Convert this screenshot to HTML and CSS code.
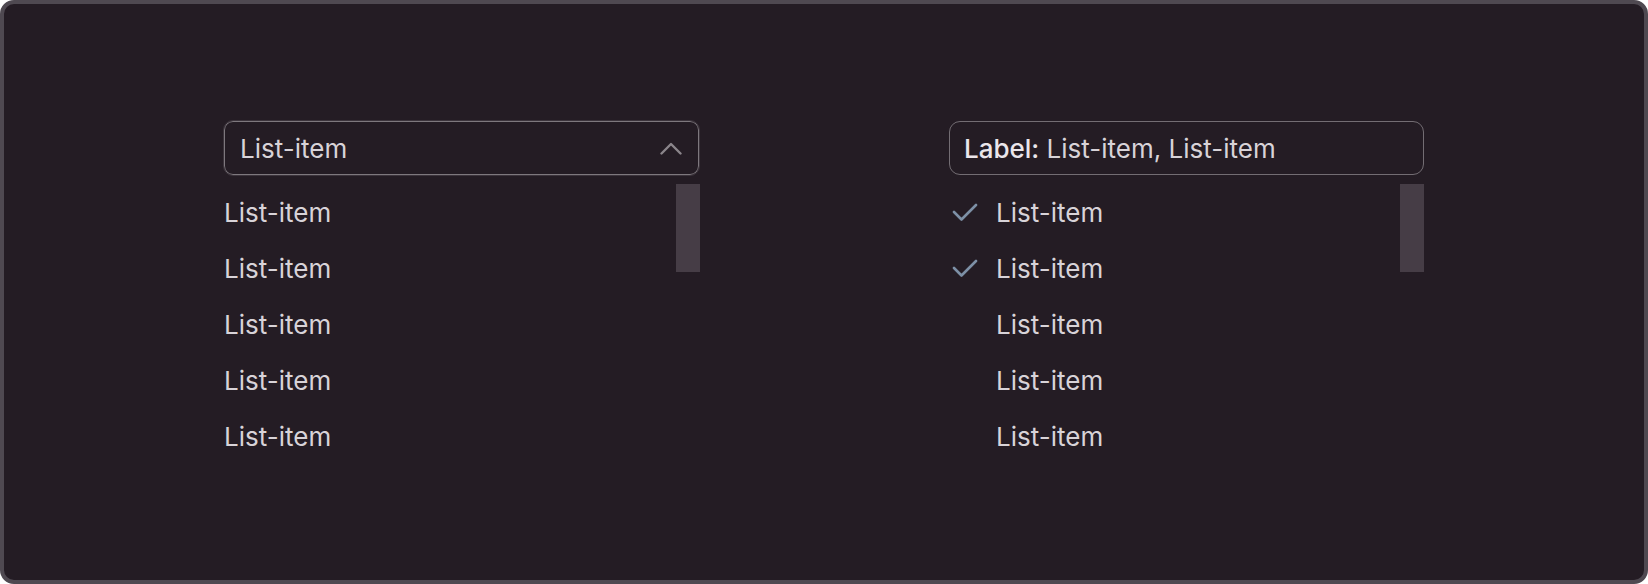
FILE: index.html
```html
<!DOCTYPE html>
<html>
<head>
<meta charset="utf-8">
<link rel="stylesheet" href="styles.css">
</head>
<body>
<div class="panel">
  <div class="columns">
    <div class="dropdown">
      <div class="select single">
        <span class="value">List-item</span>
        <svg class="chevron" width="22" height="13" viewBox="0 0 22 13"><path d="M1.5 11.5 L11 2 L20.5 11.5" fill="none" stroke="#8b858b" stroke-width="2.4" stroke-linecap="round" stroke-linejoin="round"/></svg>
      </div>
      <ul class="list">
        <li class="item">List-item</li>
        <li class="item">List-item</li>
        <li class="item">List-item</li>
        <li class="item">List-item</li>
        <li class="item">List-item</li>
        <span class="scrollbar"></span>
      </ul>
    </div>
    <div class="dropdown">
      <div class="select multi">
        <span class="value"><b class="label">Label:</b> List-item, List-item</span>
      </div>
      <ul class="list">
        <li class="item checkable"><svg class="check" width="26" height="18" viewBox="0 0 26 18"><path d="M2 9 L9.5 16.5 L24 2" fill="none" stroke="#7d90a6" stroke-width="2.6" stroke-linecap="round" stroke-linejoin="round"/></svg><span>List-item</span></li>
        <li class="item checkable"><svg class="check" width="26" height="18" viewBox="0 0 26 18"><path d="M2 9 L9.5 16.5 L24 2" fill="none" stroke="#7d90a6" stroke-width="2.6" stroke-linecap="round" stroke-linejoin="round"/></svg><span>List-item</span></li>
        <li class="item checkable"><span class="check-space"></span><span>List-item</span></li>
        <li class="item checkable"><span class="check-space"></span><span>List-item</span></li>
        <li class="item checkable"><span class="check-space"></span><span>List-item</span></li>
        <span class="scrollbar"></span>
      </ul>
    </div>
  </div>
</div>
</body>
</html>
```

FILE: styles.css
```css
html, body {
  margin: 0;
  padding: 0;
  background: #ffffff;
}

.panel {
  box-sizing: border-box;
  width: 1648px;
  height: 584px;
  background: #241c24;
  border: 4px solid #4f4951;
  border-radius: 14px;
  font-family: "Inter", "Noto Sans", sans-serif;
  color: #d8d3d8;
}

.columns {
  display: grid;
  grid-template-columns: 476px 475px;
  column-gap: 249px;
  padding: 117px 0 0 220px;
}

.dropdown {
  display: flex;
  flex-direction: column;
  gap: 9px;
}

.select {
  box-sizing: border-box;
  height: 54px;
  display: flex;
  align-items: center;
  justify-content: space-between;
  padding: 0 16px 0 15px;
  border-radius: 9px;
  font-size: 26px;
}

.select.single {
  width: 475px;
  border: 1.5px solid #7e787e;
  outline: 1px solid #3c343c;
  outline-offset: 0;
}

.select.multi {
  width: 475px;
  padding-left: 14px;
  border: 1.5px solid #736d73;
  border-radius: 11px;
}

.value {
  white-space: nowrap;
  color: #d8d3d8;
}

.label {
  font-weight: 500;
  color: #ebe6eb;
}

.chevron {
  display: block;
}

.list {
  position: relative;
  list-style: none;
  margin: 0;
  padding: 0;
}

.item {
  height: 56px;
  display: flex;
  align-items: center;
  font-size: 26px;
  color: #d8d3d8;
}

.item.checkable {
  gap: 18px;
}

.check {
  display: block;
  margin-left: 3px;
}

.check-space {
  display: block;
  width: 26px;
  margin-left: 3px;
}

.scrollbar {
  position: absolute;
  top: 0;
  right: 0;
  width: 24px;
  height: 88px;
  background: #463d46;
}
```
